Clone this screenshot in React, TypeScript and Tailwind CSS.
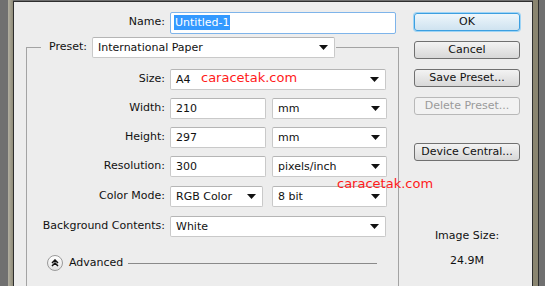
import React from "react"

const font = { fontFamily: '"DejaVu Sans", Tahoma, sans-serif' }

function Arrow() {
  return (
    <svg width="9" height="5" viewBox="0 0 9 5" className="shrink-0">
      <path d="M0 0h9L4.5 5z" fill="#111" />
    </svg>
  )
}

function Select({ value, className = "" }: { value: string; className?: string }) {
  return (
    <div
      className={`flex h-[21px] items-center justify-between rounded-[2px] border border-[#c9c9c9] border-t-[#b5b5b5] bg-white pl-[5px] pr-[6px] ${className}`}
    >
      <span className="text-[11px] leading-none text-[#111]">{value}</span>
      <Arrow />
    </div>
  )
}

function Field({ value, className = "" }: { value: string; className?: string }) {
  return (
    <div
      className={`flex h-[21px] items-center rounded-[2px] border border-[#c9c9c9] border-t-[#b5b5b5] bg-white pl-[5px] ${className}`}
    >
      <span className="text-[11px] leading-none text-[#111]">{value}</span>
    </div>
  )
}

function Row({ label, children }: { label: string; children: React.ReactNode }) {
  return (
    <div className="flex h-[21px] items-center">
      <div className="w-[143px] pr-[5px] text-right text-[11px] text-[#111]">{label}</div>
      <div className="flex gap-[6px]">{children}</div>
    </div>
  )
}

function Button({ label, primary, disabled }: { label: string; primary?: boolean; disabled?: boolean }) {
  const tone = primary
    ? "border-[#3c9fe0] shadow-[0_0_0_1px_#9fd4f5] bg-gradient-to-b from-[#eef6fb] to-[#cfe3f0] text-[#111]"
    : disabled
      ? "border-[#b8b8b8] bg-[#f2f2f2] text-[#9a9a9a]"
      : "border-[#707070] bg-gradient-to-b from-[#f3f3f3] to-[#d8d8d8] text-[#111]"
  return (
    <div className={`flex h-[18px] w-[106px] items-center justify-center rounded-[3px] border text-[11px] ${tone}`}>
      {label}
    </div>
  )
}

export default function App() {
  return (
    <div className="flex h-[286px] w-[545px] overflow-hidden bg-[#6f6f6f]" style={font}>
      <div className="w-[8px] shrink-0 bg-[#707070]" />
      <div className="w-[5px] shrink-0 bg-gradient-to-r from-[#b3b0a2] to-[#8f8b78]" />
      <div className="relative mt-[1px] flex w-[520px] shrink-0 border-l border-r border-t border-[#2e2e2e] bg-[#ededed]">
        {/* form */}
        <div className="w-[400px] shrink-0 pt-[10px]">
          <div className="flex h-[21px] items-center">
            <div className="w-[156px] pr-[5px] text-right text-[11px] text-[#111]">Name:</div>
            <div className="flex h-[22px] w-[226px] items-center rounded-[2px] border border-[#7eb4ea] bg-white pl-[3px]">
              <span className="bg-[#3399ff] px-[1px] text-[11px] leading-[15px] text-white">Untitled-1</span>
            </div>
          </div>

          <fieldset className="ml-[12px] mt-[4px] h-[300px] w-[373px] border border-[#a3a3a3] px-0 pb-0 pt-[11px]">
            <legend className="ml-[14px] flex items-center pl-[8px] pr-[1px]">
              <span className="pr-[5px] text-[11px] text-[#111]">Preset:</span>
              <Select value="International Paper" className="w-[243px]" />
            </legend>
            <div className="flex flex-col gap-[8px]">
              <Row label="Size:">
                <Select value="A4" className="w-[216px]" />
              </Row>
              <Row label="Width:">
                <Field value="210" className="w-[96px]" />
                <Select value="mm" className="w-[115px]" />
              </Row>
              <Row label="Height:">
                <Field value="297" className="w-[96px]" />
                <Select value="mm" className="w-[115px]" />
              </Row>
              <Row label="Resolution:">
                <Field value="300" className="w-[96px]" />
                <Select value="pixels/inch" className="w-[115px]" />
              </Row>
              <div className="mt-[1px]">
                <Row label="Color Mode:">
                  <Select value="RGB Color" className="w-[93px]" />
                  <Select value="8 bit" className="ml-[3px] w-[115px]" />
                </Row>
              </div>
              <div className="mt-[1px]">
                <Row label="Background Contents:">
                  <Select value="White" className="w-[216px]" />
                </Row>
              </div>
              <div className="mt-[10px] flex items-center pl-[20px]">
                <div className="flex h-[16px] w-[16px] items-center justify-center rounded-full border border-[#9a9a9a] bg-gradient-to-b from-white to-[#e2e2e2]">
                  <svg width="8" height="8" viewBox="0 0 8 8">
                    <path d="M1 4l3-3 3 3M1 7l3-3 3 3" fill="none" stroke="#111" strokeWidth="1.5" />
                  </svg>
                </div>
                <span className="ml-[6px] text-[11px] text-[#111]">Advanced</span>
                <div className="ml-[5px] h-px w-[249px] bg-[#8a8a8a]" />
              </div>
            </div>
          </fieldset>
        </div>

        {/* buttons */}
        <div className="flex w-[106px] flex-col items-center pt-[11px]">
          <div className="flex flex-col gap-[10px]">
            <Button label="OK" primary />
            <Button label="Cancel" />
            <Button label="Save Preset..." />
            <Button label="Delete Preset..." disabled />
          </div>
          <div className="mt-[28px]">
            <Button label="Device Central..." />
          </div>
          <div className="mt-[67px] text-[11px] text-[#111]">Image Size:</div>
          <div className="mt-[8px] text-[11px] text-[#111]">24.9M</div>
        </div>

        <div className="absolute left-[187px] top-[66px] text-[13px] text-[#ff1a1a]">caracetak.com</div>
        <div className="absolute left-[323px] top-[172px] text-[13px] text-[#ff1a1a]">caracetak.com</div>
      </div>
      <div className="w-[5px] shrink-0 bg-[#8a8570]" />
      <div className="w-px shrink-0 bg-[#2e2e2e]" />
      <div className="w-[6px] shrink-0 bg-[#707070]" />
    </div>
  )
}
